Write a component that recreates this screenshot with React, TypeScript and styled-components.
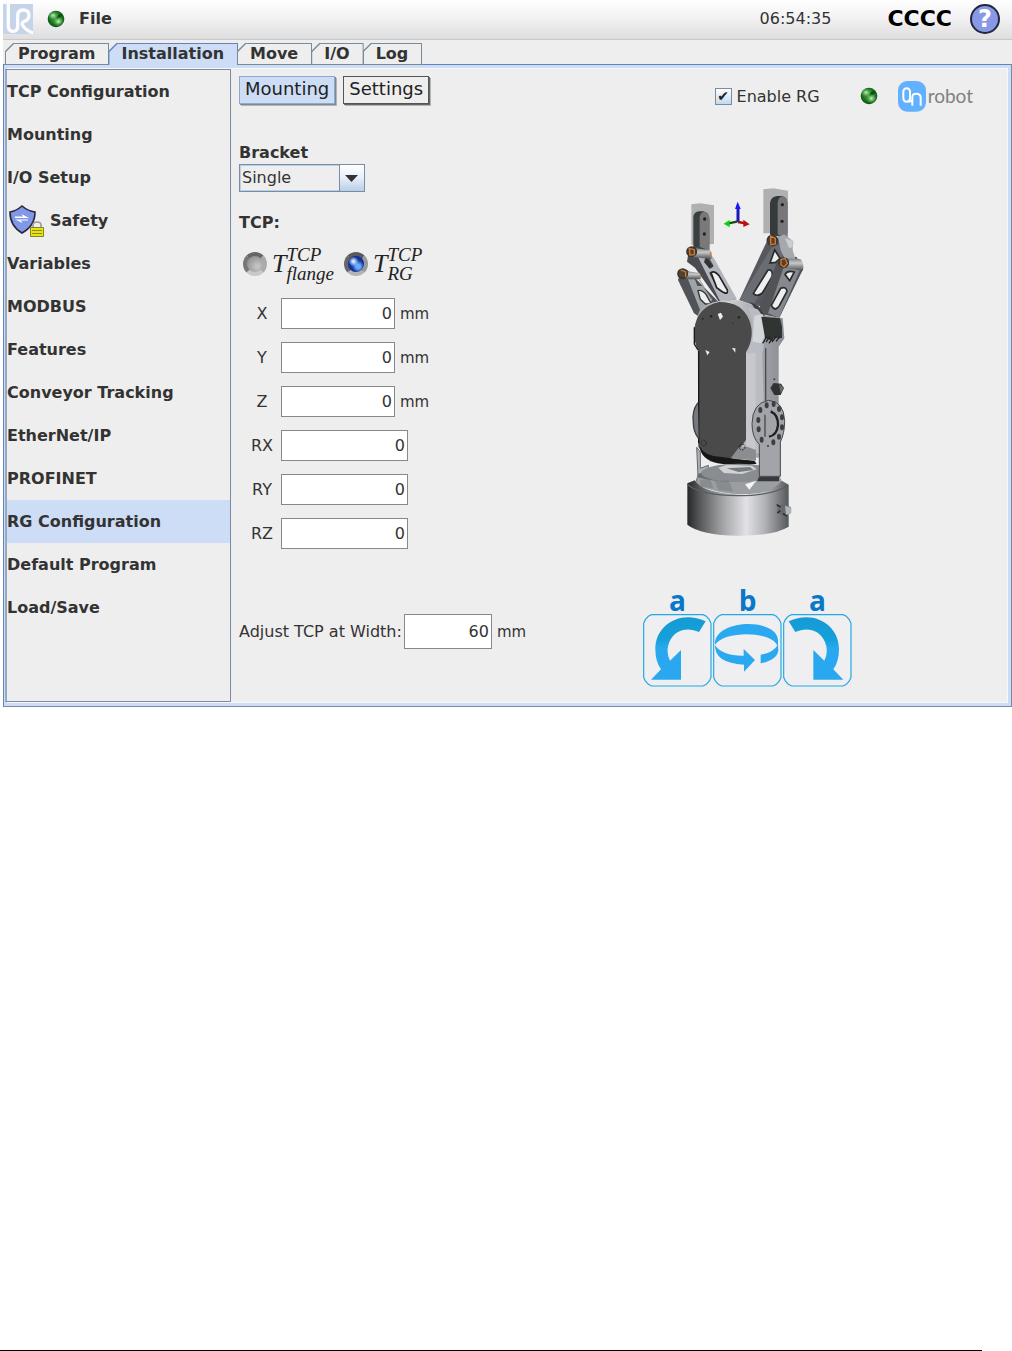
import React, { useState } from "react";
import styled, { createGlobalStyle } from "styled-components";

const c = {
  ink: "#333333",
  face: "#eeeeee",
  sel: "#cdddf6",
  line: "#6382bf",
  edge: "#7a8a99",
  steel: "#7a8ba6",
};

const Global = createGlobalStyle`
  *, *::before, *::after { box-sizing: border-box; }
  body { margin: 0; background: #fff; }
  body, button, input, select {
    font-family: "DejaVu Sans", sans-serif;
    font-size: 16px;
    color: ${c.ink};
  }
  button { padding: 0; border: 0; background: none; }
`;

const Page = styled.div`
  min-height: 100vh;
  display: flex;
  flex-direction: column;
`;

const Window = styled.main`
  margin-left: 3px;
  background: ${c.face};
`;

const TopBar = styled.header`
  height: 40px;
  display: flex;
  align-items: center;
  padding: 0 12px 2px 0;
  background: linear-gradient(#ffffff, #f4f2f4 45%, #dedede);
  border-bottom: 1px solid #c8c8c8;
`;

const FileButton = styled.button`
  display: flex;
  align-items: center;
  gap: 14px;
  margin-left: 14px;
  font-weight: bold;
`;

const Clock = styled.time`
  margin-left: auto;
`;

const RobotState = styled.strong`
  margin: 0 18px 0 56px;
  font-size: 22px;
  line-height: 26px;
  color: #000;
`;

const HelpButton = styled.button`
  width: 30px;
  height: 30px;
  border: 2px solid #23273d;
  border-radius: 50%;
  background: #8798e6;
  color: #fff;
  font-size: 24px;
  line-height: 26px;
  font-weight: bold;
`;

const TabBar = styled.nav`
  display: flex;
  padding: 3px 0 0 2px;
  margin-bottom: -1px;
`;

const Tab = styled.button<{ $on?: boolean }>`
  position: relative;
  z-index: 0;
  height: 22px;
  padding: 0 14px 0 13px;
  margin-right: -1px;
  font-weight: bold;
  line-height: 20px;
  background: ${(p) => (p.$on ? c.line : c.edge)};
  clip-path: polygon(8px 0, 100% 0, 100% 100%, 0 100%, 0 8px);
  &::before {
    content: "";
    position: absolute;
    z-index: -1;
    inset: 1px 1px ${(p) => (p.$on ? 0 : 1)}px 1px;
    background: ${(p) => (p.$on ? c.sel : c.face)};
    clip-path: polygon(8px 0, 100% 0, 100% 100%, 0 100%, 0 8px);
  }
`;

const Panel = styled.div`
  display: grid;
  grid-template-columns: 226px 1fr;
  padding: 4px 3px 4px 1px;
  border: 1px solid ${c.line};
  border-bottom-color: ${c.steel};
  border-right-color: ${c.steel};
  box-shadow: inset 0 0 0 3px ${c.sel}, inset 0 0 0 4px #f8f8f8;
`;

const Sidebar = styled.nav`
  border: 1px solid ${c.steel};
  border-left: 2px solid #98aac2;
  background: ${c.face};
`;

const SideItem = styled.button<{ $on?: boolean }>`
  display: flex;
  align-items: center;
  gap: 4px;
  width: 100%;
  height: 43px;
  font-weight: bold;
  text-align: left;
  background: ${(p) => (p.$on ? c.sel : "transparent")};
`;

const Content = styled.section`
  display: grid;
  grid-template-columns: 1fr 365px;
  padding: 7px 0 15px 8px;
`;

const SubTabs = styled.div`
  display: flex;
  gap: 8px;
`;

const SubTab = styled.button<{ $on?: boolean }>`
  height: 28px;
  padding: 0 5px 2px;
  font-size: 18px;
  line-height: 24px;
  color: #222;
  border: 1px solid ${(p) => (p.$on ? "#8fa9c9" : "#555")};
  background: ${(p) => (p.$on ? c.sel : c.face)};
  box-shadow: 1px 1px 0 0 ${(p) => (p.$on ? "#7d8894" : "#666")}, 2px 2px 0 0 #b4b4b4;
`;

const Bracket = styled.div`
  display: flex;
  flex-direction: column;
  align-items: flex-start;
  margin-top: 38px;
  font-weight: bold;
  line-height: 22px;
`;

const SelectBox = styled.span`
  position: relative;
  display: flex;
  svg {
    position: absolute;
    right: 1px;
    top: 1px;
    pointer-events: none;
  }
`;

const Select = styled.select`
  appearance: none;
  width: 126px;
  height: 28px;
  padding: 0 28px 2px 2px;
  border: 1px solid ${c.steel};
  border-radius: 0;
  background: ${c.face};
  box-shadow: inset 0 0 0 1px #b8cfe5;
`;

const Group = styled.fieldset`
  margin: 20px 0 0;
  padding: 0;
  border: 0;
`;

const GroupTitle = styled.legend`
  padding: 0;
  font-weight: bold;
  line-height: 22px;
`;

const Frames = styled.div`
  display: flex;
  gap: 10px;
  height: 38px;
  margin: 11px 0 15px 4px;
`;

const FrameOption = styled.label`
  display: flex;
  align-items: center;
  gap: 5px;
`;

const Radio = styled.input`
  appearance: none;
  width: 24px;
  height: 24px;
  margin: 0;
  border-radius: 50%;
  border: 4px solid #777;
  border-color: #666 #aaa #c8c8c8 #777;
  background: radial-gradient(circle at 65% 65%, #c8cac8, #858985 90%);
  &:checked {
    border-color: #59595f #9a9a9e #b4b4b4 #66666c;
    background:
      radial-gradient(circle at 34% 34%, #d3e5ff 0 1px, transparent 5px),
      radial-gradient(circle at 64% 66%, #6faaff 0 2px, transparent 6px),
      radial-gradient(circle, #1550cf 20%, #071d66 90%);
  }
`;

const Formula = styled.span`
  display: flex;
  align-items: center;
  font: italic 26px/30px "Liberation Serif", serif;
  color: #222;
`;

const Scripts = styled.span`
  display: flex;
  flex-direction: column;
  font-size: 19px;
  line-height: 19px;
`;

const Fields = styled.div`
  display: grid;
  gap: 13px;
`;

const Field = styled.div`
  display: flex;
  align-items: center;
`;

const FieldLabel = styled.label`
  width: 42px;
  padding-left: 4px;
  text-align: center;
`;

const NumberBox = styled.input<{ $w: number; $tall?: boolean }>`
  width: ${(p) => p.$w}px;
  height: ${(p) => (p.$tall ? 35 : 31)}px;
  padding: 0 2px;
  text-align: right;
  border: 1px solid #888;
  border-radius: 0;
  background: #fff;
`;

const Unit = styled.span`
  margin-left: 5px;
  font-size: 15px;
`;

const Adjust = styled(Field)`
  margin-top: 65px;
  label { margin-right: 2px; }
`;

const Visual = styled.div`
  display: flex;
  flex-direction: column;
  align-items: flex-start;
  padding-top: 4px;
`;

const DeviceRow = styled.div`
  display: flex;
  align-items: center;
  align-self: flex-end;
  height: 32px;
  padding-right: 35px;
`;

const EnableLabel = styled.label`
  display: flex;
  align-items: center;
  gap: 5px;
  margin-right: 40px;
`;

const Check = styled.input`
  appearance: none;
  display: grid;
  place-items: center;
  width: 17px;
  height: 17px;
  margin: 0;
  border: 1px solid ${c.steel};
  background: linear-gradient(#fff, #c4d8ee);
  &:checked::before {
    content: "✔";
    font-size: 14px;
    line-height: 14px;
    color: #222;
  }
`;

const Brand = styled.div`
  display: flex;
  align-items: center;
  gap: 2px;
  margin-left: 20px;
  font: 19px/26px "Lato", sans-serif;
  color: #808080;
`;

const RobotArt = styled.svg`
  margin: 68px 0 46px 7px;
`;

const Turns = styled.div`
  display: flex;
  gap: 1px;
`;

const TurnCell = styled.div`
  display: flex;
  flex-direction: column;
  align-items: center;
  font: bold 28px/28px "Open Sans", sans-serif;
  color: #0878c8;
`;

const TurnButton = styled.button`
  display: block;
  svg { display: block; }
`;

const Rule = styled.hr`
  width: 97%;
  height: 1px;
  margin: auto auto 0 0;
  border: 0;
  background: #000;
`;

const menu = [
  "TCP Configuration", "Mounting", "I/O Setup", "Safety", "Variables", "MODBUS", "Features",
  "Conveyor Tracking", "EtherNet/IP", "PROFINET", "RG Configuration", "Default Program", "Load/Save",
];
const tabs = ["Program", "Installation", "Move", "I/O", "Log"];
const axes = ["X", "Y", "Z", "RX", "RY", "RZ"];

const UrLogo = () => (
  <svg width="30" height="30" viewBox="0 0 90 90" aria-label="UR">
    <path d="M0 0H90V90H0Z" fill="#c6d4e9" />
    <path d="M16 0V66Q16 82 30 82T44 66V36Q44 18 60 18Q78 18 78 34Q78 48 62 53Q54 57 60 65Q66 78 92 88" fill="none" stroke="#fdfdfe" strokeWidth="10" />
  </svg>
);

const Ball = () => (
  <svg width="18" height="18" viewBox="0 0 18 18" aria-hidden="true">
    <defs>
      <radialGradient id="ball" cx="50%" cy="45%" r="55%">
        <stop offset="0" stopColor="#49a147" />
        <stop offset=".65" stopColor="#1c7a24" />
        <stop offset="1" stopColor="#0a4a10" />
      </radialGradient>
      <radialGradient id="glow"><stop stopColor="#c9f5b9" /><stop offset="1" stopColor="#62b75a" stopOpacity="0" /></radialGradient>
    </defs>
    <circle cx="9" cy="9" r="8.3" fill="url(#ball)" />
    <path d="M9 9Q11 3 15 4Q17 7 9 9" fill="#0b5513" />
    <ellipse cx="6" cy="5.5" rx="5.5" ry="4.5" fill="url(#glow)" />
    <ellipse cx="11.500" cy="11.500" rx="5.5" ry="5" fill="url(#glow)" />
  </svg>
);

const Shield = () => (
  <svg width="39" height="34" viewBox="0 0 39 34" aria-hidden="true">
    <path d="M15 2Q21 7 28 8Q28 22 15 29Q3 22 3 8Q9 7 15 2Z" fill="#8197e7" stroke="#252936" strokeWidth="1.6" />
    <path d="M8 12.500H16L14.500 10L22 14H8M21 16.500H14L15.500 19L8 15.500H21" fill="#fff" />
    <path d="M26 24V21Q26 18 30 18T34 21V24" fill="none" stroke="#999" strokeWidth="1.6" />
    <path d="M23.500 23.500H36.500V32.500H23.500Z" fill="#e9e409" stroke="#87832a" />
    <path d="M25 26.500H35M25 29.500H35" stroke="#8d8918" />
  </svg>
);

const BrandMark = () => (
  <svg width="28" height="31" viewBox="0 0 84 93" aria-label="On">
    <rect width="84" height="92" rx="28" fill="#61b1ff" />
    <rect x="16" y="22" width="20" height="40" rx="10" fill="none" stroke="#fff" strokeWidth="6" />
    <path d="M30 61Q43 63 43 54V48Q43 38 55 38T68 49V74M43 52V74" fill="none" stroke="#fff" strokeWidth="6" />
  </svg>
);

const Robot = () => (
  <RobotArt width="180" height="360" viewBox="0 0 540 1080" role="img" aria-label="RG gripper">
    <defs>
      <linearGradient id="base">
        <stop stopColor="#252829" /><stop offset=".12" stopColor="#555759" /><stop offset=".35" stopColor="#a3a4a6" />
        <stop offset=".58" stopColor="#e1e1e6" /><stop offset=".76" stopColor="#b3b4b8" /><stop offset="1" stopColor="#55585b" />
      </linearGradient>
      <linearGradient id="side">
        <stop stopColor="#9da0a3" /><stop offset=".35" stopColor="#cfd1d5" /><stop offset=".7" stopColor="#a2a4a9" /><stop offset="1" stopColor="#8b8d92" />
      </linearGradient>
      <linearGradient id="pin" x2="0" y2="1"><stop stopColor="#777b7d" /><stop offset=".4" stopColor="#c8caca" /><stop offset="1" stopColor="#4c5052" /></linearGradient>
    </defs>

    <path d="M124 73L150 70L192 76V192L124 195ZM340 28L370 25L414 32V160H340Z" fill="#b0b0b0" />
    <path d="M130 202V108Q133 96 147 94H160Q176 98 178 114V212H130Z" fill="#394040" />
    <path d="M149 200V112Q151 96 164 96Q176 98 178 114V212Z" fill="#79797c" />
    <path d="M360 164V68Q363 50 381 48H397Q411 52 412 67V174Z" fill="#343b3a" />
    <path d="M383 164V68Q386 50 397 49Q411 52 412 67V174Z" fill="#77777b" />
    <g fill="#222"><circle cx="164" cy="117" r="5" /><circle cx="163" cy="162" r="5" /><circle cx="397" cy="74" r="5" /><circle cx="396" cy="124" r="5" /></g>

    <g fillRule="evenodd">
      <path d="M92 275L112 270L205 365L150 412L132 400L84 300Z" fill="#505357" />
      <path d="M105 275L133 280L187 360L154 400ZM134 296L142 318L162 318L151 300ZM143 335L159 368L177 364L165 338Z" fill="#a0a3a8" />
      <path d="M144 332Q154 328 168 343L184 372L166 372L151 358Z" fill="#eee" stroke="#303335" strokeWidth="4" />
      <path d="M118 203L145 200L170 213L188 232L258 358L210 370L135 263L111 245Z" fill="#484b4f" />
      <path d="M141 225L167 218L190 232L261 358L211 365ZM164 236L177 260L191 258L178 235ZM177 278L205 330Q222 344 234 340L205 286Q192 272 177 278Z" fill="#b2b5bb" />
      <path d="M183 278Q193 270 207 287L232 330Q235 344 220 337L200 323Z" fill="#eee" stroke="#202224" strokeWidth="5" />
      <path d="M168 230L190 260L179 266L162 246Z" fill="#303335" />
      <path d="M350 185L405 165L424 210L349 385L268 360Z" fill="#55585c" />
      <path d="M365 202L394 192L401 222L310 376L268 360Z" fill="#696c72" />
      <path d="M360 249L374 210L390 235L377 247ZM354 270Q370 268 366 290L337 339Q321 352 310 341Z" fill="#eee" stroke="#292c2e" strokeWidth="5" />
      <path d="M383 240L439 230L460 266L388 413L322 400Z" fill="#515357" />
      <path d="M401 262L451 268L387 413L354 400ZM405 284L421 303L432 280ZM389 325L366 382Q374 398 387 382L411 336Q410 320 389 325Z" fill="#85898d" />
      <path d="M405 283Q412 270 433 276L419 302ZM392 325Q409 318 411 334L388 377Q375 397 364 376Z" fill="#eee" stroke="#2a2c2f" strokeWidth="5" />
    </g>

    <path d="M384 172L402 163L430 184L428 210L438 242L414 256L392 211Z" fill="#a5a8ac" />
    <path d="M405 175L428 182L428 202L417 204Z" fill="#cbcdcf" />
    <path d="M123 203L180 210Q188 221 184 237L128 232Z" fill="url(#pin)" />
    <path d="M98 272L147 278Q156 287 151 298L98 298Z" fill="url(#pin)" />
    <path d="M400 234L451 237Q465 251 458 272L401 263Z" fill="url(#pin)" />
    <g fill="#51422f" stroke="#393532" strokeWidth="5"><circle cx="125" cy="215" r="14" /><circle cx="98" cy="281" r="14" /><circle cx="367" cy="181" r="15" /><circle cx="401" cy="248" r="14" /></g>
    <g fill="none" stroke="#d6782f" strokeWidth="4"><path d="M118 205L133 209V224L120 225ZM92 270L107 276V291M362 168L376 175V192L362 194ZM393 239L405 235L412 250L402 261L393 255ZM182 215V233M149 286V294" /></g>

    <path d="M143 435Q135 390 173 373Q205 358 265 361L315 378L340 405L398 415L403 475L386 500V700L349 830L180 846L145 790Z" fill="url(#side)" />
    <path d="M300 365L325 378L345 408L325 400Z" fill="#3a3e3e" />
    <path d="M293 380L323 388Q346 412 345 465L337 525L345 820H288V505Q324 450 293 380Z" fill="#b9bcc2" />
    <path d="M313 407L338 402L346 463L334 490L308 485Z" fill="#d3d7da" />
    <path d="M334 410L390 415L396 440V474L370 475L366 482L345 474Z" fill="#303532" />
    <path d="M338 490L350 470M348 486L359 470M357 490L367 474M366 486L378 470M378 484L390 470" stroke="#202322" strokeWidth="4" />
    <path d="M288 520H317V820H288Z" fill="#c6c8ce" />
    <path d="M347 505V670" stroke="#494b4e" strokeWidth="4" />
    <path d="M145 800V510Q130 488 133 447Q141 381 207 366Q276 365 298 421Q316 471 288 517V780L270 805L245 842Q168 842 145 800Z" fill="#4a4a4a" />
    <path d="M146 512V790M133 442V492L144 510" fill="none" stroke="#171a1a" strokeWidth="4" />
    <path d="M148 798Q164 829 210 830Q261 838 313 842L320 851Q260 861 203 850Q153 839 148 798Z" fill="#161717" />
    <path d="M266 803L292 800L318 810V842Q276 838 242 835Z" fill="#8b8d90" />
    <g fill="#eee"><path d="M203 402L213 398L219 410L210 420ZM166 510L179 516L172 526ZM246 504L256 505V518Z" /></g>
    <g fill="#242626"><circle cx="158" cy="416" r="3" /><circle cx="183" cy="409" r="4" /><circle cx="267" cy="412" r="4" /><circle cx="248" cy="430" r="2" /></g>

    <path d="M144 668Q125 692 130 728Q130 755 146 776" fill="#77797d" stroke="#3a3e42" strokeWidth="4" />
    <path d="M140 802L151 816V865L175 856V895L144 890Z" fill="#b0b1b6" stroke="#65676c" strokeWidth="3" />
    <path d="M134 911L144 882Q270 826 385 890L394 920Q295 967 134 911Z" fill="#6a6d70" />
    <ellipse cx="265" cy="879" rx="112" ry="28" fill="#898c90" />
    <path d="M205 863L231 854L306 857L320 868L276 882L222 879Z" fill="#d1d2d4" />
    <path d="M230 865L300 861L311 870L266 876Z" fill="#777a7c" />
    <path d="M143 892Q248 921 390 890L400 916Q282 970 136 914Z" fill="#9b9ea0" />
    <path d="M112 910L134 901Q155 938 263 943Q367 943 395 902L416 914V1040Q370 1068 264 1067Q153 1066 112 1034Z" fill="url(#base)" />
    <path d="M114 914Q149 945 263 947Q372 947 414 915" fill="none" stroke="#5b5f62" strokeWidth="4" />
    <path d="M285 913L319 902L298 929Z" fill="#f5f5f5" />
    <path d="M150 900L180 896L190 925L152 920ZM195 904L236 901L250 935L205 930Z" fill="#76797b" opacity=".5" />

    <path d="M306 731Q307 670 355 661Q401 663 404 722Q404 760 391 786V889H328V793Q306 773 306 731Z" fill="#a3a4a9" stroke="#44484b" strokeWidth="3" />
    <path d="M345 704V770" stroke="#44484a" strokeWidth="4" />
    <path d="M362 694Q385 705 384 735Q381 766 357 770" fill="none" stroke="#1d2021" strokeWidth="7" />
    <g fill="#3b3f42">
      {[[331,690],[350,676],[371,672],[387,687],[396,712],[396,742],[387,770],[370,787],[335,779],[326,748],[325,720]].map(([x, y]) => <ellipse key={`${x}-${y}`} cx={x} cy={y} rx="6" ry="9" />)}
      <circle cx="354" cy="798" r="3" /><circle cx="373" cy="598" r="3" />
    </g>
    <path d="M327 891H387V904H321Z" fill="#37393b" />
    <path d="M361 624L371 609L393 611L402 624L392 645H373Z" fill="#303334" />
    <path d="M387 612L402 624L392 640Z" fill="#656b6c" />
    <path d="M382 978L400 972L423 982V999L402 1008L383 1000Z" fill="#666a6d" />
    <path d="M405 977L424 983V998L408 1006Z" fill="#b0b3b6" />
    <path d="M380 974L392 981M382 999L391 992M399 1001L411 1008" stroke="#1e2223" strokeWidth="4" />
    <g fill="none" stroke="#222" strokeWidth="3" strokeDasharray="5 4"><circle cx="161" cy="789" r="8" /><circle cx="276" cy="801" r="9" /></g>

    <path d="M264 126V85" stroke="#1919ba" strokeWidth="9" /><path d="M255 87L263 65L272 87Z" fill="#1616ff" />
    <path d="M261 125L232 131" stroke="#164b16" strokeWidth="7" /><path d="M239 120V142L221 131Z" fill="#05d407" />
    <path d="M264 126L287 130" stroke="#a20d0d" strokeWidth="7" /><path d="M280 119L299 133L280 141Z" fill="#c60b0b" />
  </RobotArt>
);

const TurnIcon = ({ kind }: { kind: "left" | "spin" | "right" }) => (
  <svg width="69" height="73" viewBox="0 0 207 219" aria-hidden="true">
    <defs>
      <linearGradient id="arc" x2="0" y2="1"><stop stopColor="#159bd5" /><stop offset=".35" stopColor="#15a0da" /><stop offset=".5" stopColor="#29a8f0" /></linearGradient>
    </defs>
    <path d="M24 2H182Q186 16 204 24V194Q188 200 182 216H24Q18 200 2 194V24Q20 16 24 2Z" fill="#efeef0" stroke="none" />
    <path d="M26 2H180L190 7L199 17L204 28V190L199 201L190 211L180 216H26L16 211L7 201L2 190V28L7 17L16 7Z" fill="#efeef0" stroke="#22a8e4" strokeWidth="3.500" />
    {kind === "spin" ? (
      <g fill="#2ba9f0">
        <path d="M6 92C2 15 190 10 195 77V100C184 50 35 48 6 92Z" />
        <path d="M6 94Q28 126 92 125V105L126 138L93 173V152Q5 148 6 94Z" />
        <path d="M195 92Q178 118 143 122V148Q191 138 196 110Z" />
      </g>
    ) : (
      <path
        transform={kind === "right" ? "translate(205 0) scale(-1 1)" : undefined}
        d="M188 22C112-14 37 33 37 105Q37 143 54 166L24 197H114V108L81 140Q67 112 79 84C95 47 133 38 168 54Z"
        fill="url(#arc)"
      />
    )}
  </svg>
);

export default function App() {
  const [tab, setTab] = useState("Installation");
  const [item, setItem] = useState("RG Configuration");
  const [sub, setSub] = useState("Mounting");
  return (
    <>
      <Global />
      <Page>
        <Window>
          <TopBar>
            <UrLogo />
            <FileButton><Ball />File</FileButton>
            <Clock>06:54:35</Clock>
            <RobotState>CCCC</RobotState>
            <HelpButton aria-label="Help">?</HelpButton>
          </TopBar>
          <TabBar>
            {tabs.map((t) => <Tab key={t} $on={t === tab} onClick={() => setTab(t)}>{t}</Tab>)}
          </TabBar>
          <Panel>
            <Sidebar>
              {menu.map((m) => (
                <SideItem key={m} $on={m === item} onClick={() => setItem(m)}>
                  {m === "Safety" && <Shield />}{m}
                </SideItem>
              ))}
            </Sidebar>
            <Content>
              <div>
                <SubTabs>
                  {["Mounting", "Settings"].map((s) => <SubTab key={s} $on={s === sub} onClick={() => setSub(s)}>{s}</SubTab>)}
                </SubTabs>
                <Bracket>
                  <label htmlFor="bracket">Bracket</label>
                  <SelectBox>
                    <Select id="bracket"><option>Single</option><option>Dual</option></Select>
                    <svg width="25" height="26" viewBox="0 0 25 26" aria-hidden="true">
                      <defs><linearGradient id="drop" x2="0" y2="1"><stop stopColor="#fff" /><stop offset=".45" stopColor="#eaf1fb" /><stop offset="1" stopColor="#b8cfe5" /></linearGradient></defs>
                      <path d="M0 0H25V26H0Z" fill="url(#drop)" />
                      <path d="M.5 0V26" stroke={c.steel} />
                      <path d="M6 10H19L12.500 17Z" fill="#333" />
                    </svg>
                  </SelectBox>
                </Bracket>
                <Group>
                  <GroupTitle>TCP:</GroupTitle>
                  <Frames>
                    <FrameOption>
                      <Radio type="radio" name="frame" />
                      <Formula>T<Scripts><span>TCP</span><span>flange</span></Scripts></Formula>
                    </FrameOption>
                    <FrameOption>
                      <Radio type="radio" name="frame" defaultChecked />
                      <Formula>T<Scripts><span>TCP</span><span>RG</span></Scripts></Formula>
                    </FrameOption>
                  </Frames>
                  <Fields>
                    {axes.map((a) => (
                      <Field key={a}>
                        <FieldLabel htmlFor={a}>{a}</FieldLabel>
                        <NumberBox id={a} $w={a.length > 1 ? 127 : 114} defaultValue="0" />
                        {a.length === 1 && <Unit>mm</Unit>}
                      </Field>
                    ))}
                  </Fields>
                </Group>
                <Adjust>
                  <label htmlFor="width">Adjust TCP at Width:</label>
                  <NumberBox id="width" $w={88} $tall defaultValue="60" />
                  <Unit>mm</Unit>
                </Adjust>
              </div>
              <Visual>
                <DeviceRow>
                  <EnableLabel><Check type="checkbox" defaultChecked />Enable RG</EnableLabel>
                  <Ball />
                  <Brand><BrandMark />robot</Brand>
                </DeviceRow>
                <Robot />
                <Turns>
                  <TurnCell>a<TurnButton aria-label="Tilt left"><TurnIcon kind="left" /></TurnButton></TurnCell>
                  <TurnCell>b<TurnButton aria-label="Rotate"><TurnIcon kind="spin" /></TurnButton></TurnCell>
                  <TurnCell>a<TurnButton aria-label="Tilt right"><TurnIcon kind="right" /></TurnButton></TurnCell>
                </Turns>
              </Visual>
            </Content>
          </Panel>
        </Window>
        <Rule />
      </Page>
    </>
  );
}
